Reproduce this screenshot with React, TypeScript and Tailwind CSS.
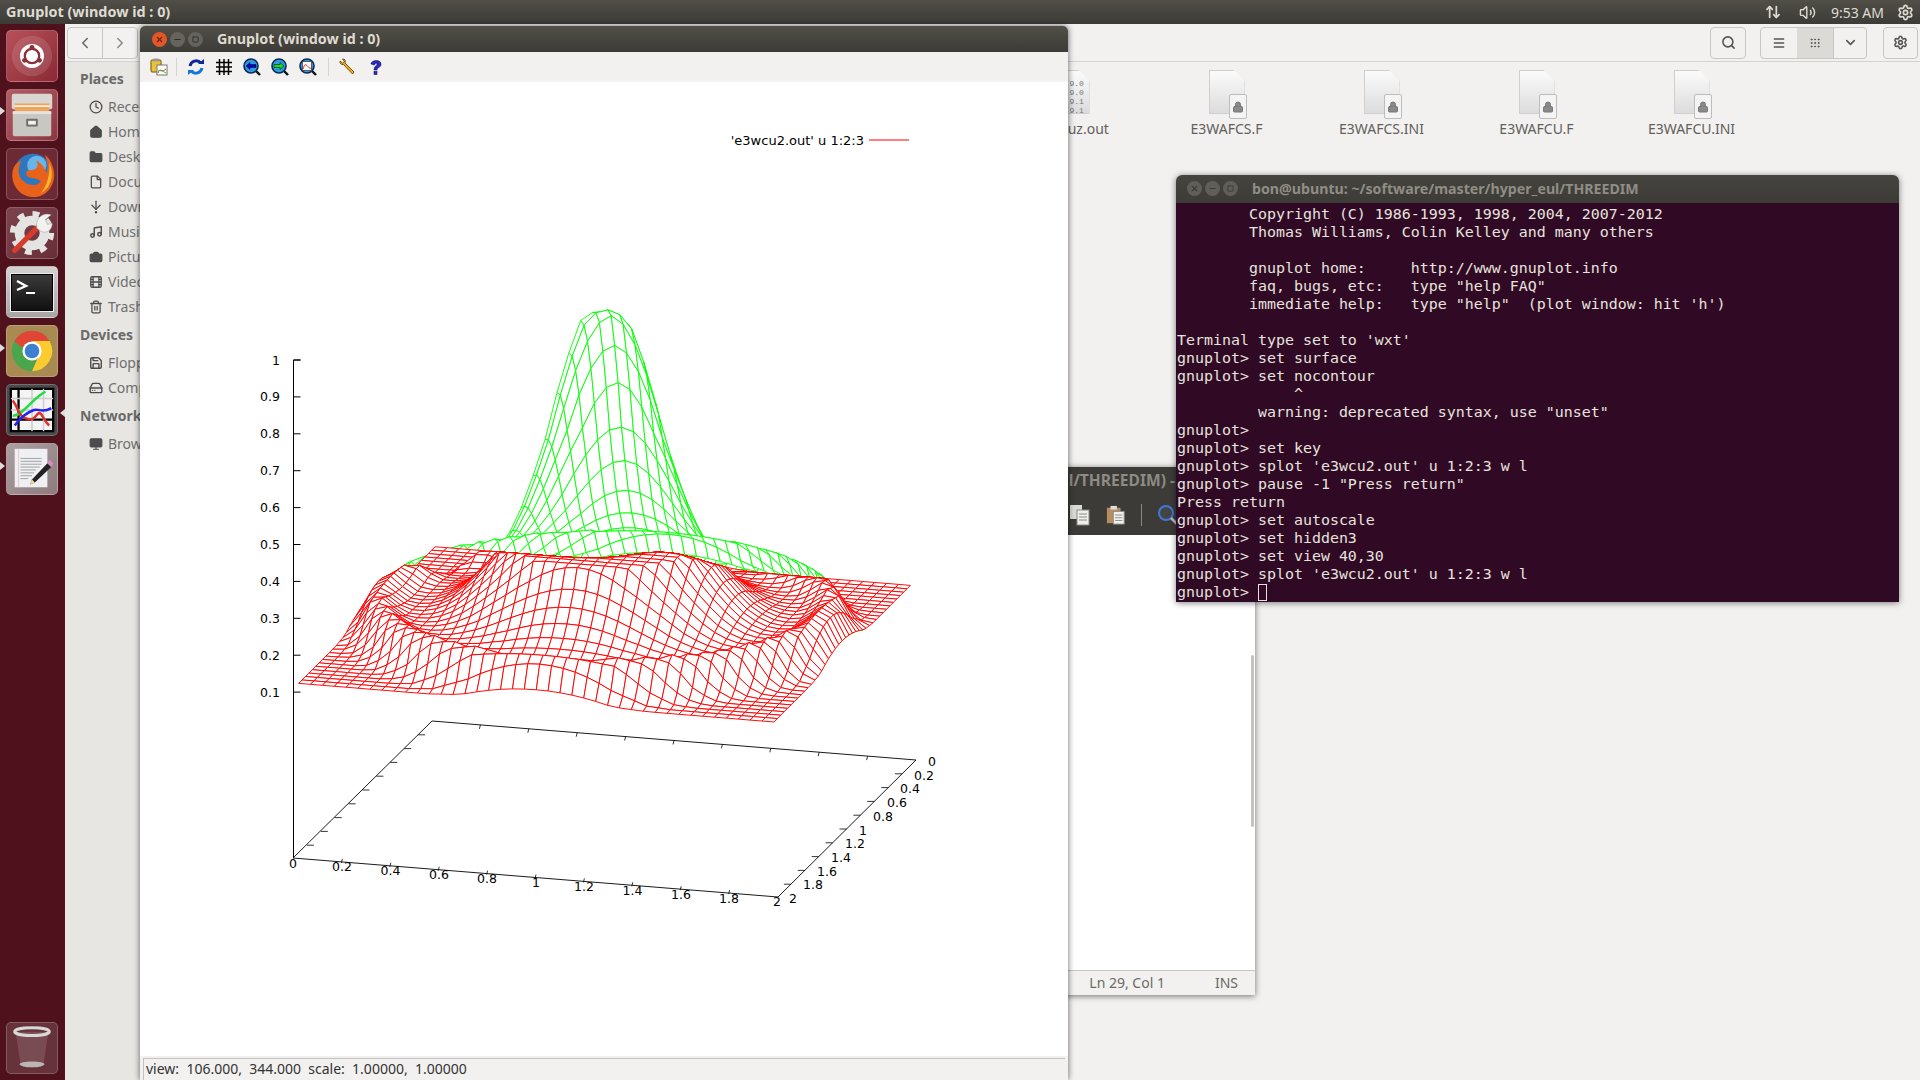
import React from "react";
import { Search, Menu, ChevronDown, Settings, ArrowUpDown, Volume2, Clock, Home, Folder, File, ArrowDownToDot, Music, Camera, Film, Trash2, Save, HardDrive, Monitor, Lock, ChevronLeft, ChevronRight, X, Minus, Square, Grip } from "lucide-react";

const UI = "font-['Noto_Sans','Open_Sans',sans-serif]";

const TABLE = [1, 0.995, 0.97, 0.88, 0.77, 0.64, 0.54, 0.45, 0.38, 0.33, 0.29, 0.255, 0.225, 0.205, 0.192, 0.188, 0.19, 0.21, 0.235, 0.22, 0.16, 0.13, 0.125];
function f(r: number) {
  const t = r / 0.05;
  if (t >= TABLE.length - 1) return 0.125;
  const i = Math.floor(t);
  return TABLE[i] + (TABLE[i + 1] - TABLE[i]) * (t - i);
}
function proj(x: number, y: number) {
  return [432 + (x / 2) * 484 - (y / 2) * 139, 721 + (x / 2) * 39 + (y / 2) * 138];
}
function projS(x: number, y: number) {
  const [a, b] = proj(x, y);
  return [605 + (a - 605) * 0.982, 809 + (b - 809) * 0.99];
}
function greenPt(x: number, y: number) {
  const r = Math.hypot(x - 1, y - 1);
  const [sx, sy] = projS(x, y);
  return [sx, sy - 129 - 369 * f(r)];
}
function smooth(t: number) {
  const u = Math.max(0, Math.min(1, t));
  return u * u * (3 - 2 * u);
}
const e0 = projS(0, 0), e1 = projS(2, 0);
const E0Y = e0[1] - 129 - 369 * 0.125;
const ESL = (e1[1] - e0[1]) / (e1[0] - e0[0]);
function redPt(x: number, y: number) {
  const r = Math.hypot(x - 1, y - 1);
  let k = smooth((y - 0.1) / 0.25);
  k *= 1 - (1 - smooth((x - 0.1) / 0.3)) * (1 - smooth((y - 0.5) / 0.3));
  const capped = f(Math.max(r, 0.4));
  const bump = 0.035 * Math.exp(-(((x - 1) / 0.2) ** 2)) * Math.exp(-((y / 0.15) ** 2));
  const z = 0.125 + k * (capped - 0.125) + bump;
  const [sx, sy] = projS(x, y);
  let py = sy - 129 - 369 * z;
  const edge = E0Y + (sx - e0[0]) * ESL - 13 * Math.exp(-(((sx - 667) / 50) ** 2));
  if (py < edge) py = edge;
  return [sx, py];
}
function quad(p: (x: number, y: number) => number[], i: number, j: number) {
  const s = 0.05;
  const a = p(i * s, j * s), b = p((i + 1) * s, j * s), c = p((i + 1) * s, (j + 1) * s), d = p(i * s, (j + 1) * s);
  const q = (v: number[]) => v[0].toFixed(1) + " " + v[1].toFixed(1);
  return `M${q(a)}L${q(b)}L${q(c)}L${q(d)}Z`;
}

function Plot() {
  const green: string[] = [];
  for (let j = 19; j >= 0; j--)
    for (let i = 0; i < 40; i++) {
      const r = Math.hypot((i + 0.5) * 0.05 - 1, (j + 0.5) * 0.05 - 1);
      if (r < 1.03) green.push(quad(greenPt, i, j));
    }
  const red: string[] = [];
  for (let j = 0; j < 40; j++) for (let i = 0; i < 40; i++) red.push(quad(redPt, i, j));
  const zt = ["1", "0.9", "0.8", "0.7", "0.6", "0.5", "0.4", "0.3", "0.2", "0.1"];
  const xl: [string, number, number][] = [["0", 293, 863], ["0.2", 342, 866], ["0.4", 390.5, 870], ["0.6", 439, 874], ["0.8", 487, 878], ["1", 536, 882], ["1.2", 584, 886], ["1.4", 632.5, 890], ["1.6", 681, 894], ["1.8", 729, 898], ["2", 777, 901]];
  const yl: [string, number, number][] = [["0", 932, 761], ["0.2", 924, 775], ["0.4", 910, 788], ["0.6", 897, 802], ["0.8", 883, 816], ["1", 863, 830], ["1.2", 855, 843], ["1.4", 841, 857], ["1.6", 827, 871], ["1.8", 813, 884], ["2", 793, 898]];
  const ticks: string[] = [];
  for (let i = 1; i < 10; i++) {
    const t = i / 5;
    const b = proj(t, 0), fr = proj(t, 2);
    ticks.push(`M${b[0]} ${b[1]}l-1 4`, `M${fr[0]} ${fr[1]}l1 -4`);
    const l = proj(0, t), rr = proj(2, t);
    ticks.push(`M${l[0]} ${l[1]}l7 0`, `M${rr[0]} ${rr[1]}l-7 0`);
  }
  return (
    <svg viewBox="140 82 928 974" className="absolute inset-0 w-full h-full">
      <text x="864" y="144.5" textAnchor="end" fontSize="13" fill="#000" fontFamily="DejaVu Sans">'e3wcu2.out' u 1:2:3</text>
      <path d="M869 140H909" stroke="#ff0000" strokeWidth="1" />
      <g fill="#fff" stroke="#00ff00" strokeWidth="0.9" strokeLinejoin="round">
        {green.map((d, i) => <path key={i} d={d} />)}
      </g>
      <g fill="#fff" stroke="#ff0000" strokeWidth="0.95" strokeLinejoin="round">
        {red.map((d, i) => <path key={i} d={d} />)}
      </g>
      <g fill="none" stroke="#000" strokeWidth="1">
        <path d="M293.5 858V360M293.5 360h7" />
        {zt.map((_, i) => <path key={i} d={`M293.5 ${(360 + i * 36.9).toFixed(1)}h7`} />)}
        <path d="M293 858L432 721L916 760L778 897Z" strokeWidth="0.9" />
        <path d={ticks.join("")} strokeWidth="0.8" />
      </g>
      <g fontFamily="DejaVu Sans" fontSize="12.5" fill="#000" textAnchor="end">
        {zt.map((t, i) => <text key={t} x="280" y={(364.5 + i * 36.9).toFixed(1)}>{t}</text>)}
      </g>
      <g fontFamily="DejaVu Sans" fontSize="12.5" fill="#000" textAnchor="middle">
        {xl.map(([t, x, y]) => <text key={"x" + t} x={x} y={y + 4.5}>{t}</text>)}
        {yl.map(([t, x, y]) => <text key={"y" + t} x={x} y={y + 4.5}>{t}</text>)}
      </g>
    </svg>
  );
}

function Tile({ bg, children }: { bg: string; children: React.ReactNode }) {
  return <div className={`w-[52px] h-[52px] rounded-[5px] border border-white/20 overflow-hidden flex items-center justify-center shrink-0 ${bg}`}>{children}</div>;
}

function Launcher() {
  return (
    <div className="w-[65px] shrink-0 bg-[#4f121d] flex flex-col items-start pl-[6px] pt-[6px] pb-[6px] gap-[7px] relative">
      <Tile bg="bg-gradient-to-br from-[#b8505a] to-[#8a2a34]">
        <svg viewBox="0 0 52 52" className="w-full h-full">
          <circle cx="26" cy="26" r="21" fill="#fff" opacity="0.12" />
          <circle cx="26" cy="26" r="12.5" fill="#fff" />
          <circle cx="26" cy="26" r="7.5" fill="none" stroke="#8c2f38" strokeWidth="2.4" />
          <circle cx="26" cy="17" r="2.5" fill="#8c2f38" /><circle cx="18.2" cy="30.5" r="2.5" fill="#8c2f38" /><circle cx="33.8" cy="30.5" r="2.5" fill="#8c2f38" />
        </svg>
      </Tile>
      <Tile bg="bg-gradient-to-br from-[#b45d66] to-[#8b3741]">
        <svg viewBox="0 0 52 52" className="w-full h-full">
          <rect x="5" y="4" width="42" height="16" rx="2" fill="#d9d7d2" />
          <rect x="8" y="14" width="36" height="8" fill="#f0a35c" /><rect x="8" y="16" width="36" height="1.5" fill="#fff" />
          <rect x="6" y="22" width="40" height="26" rx="1.5" fill="#c9c7c2" /><rect x="6" y="22" width="40" height="3" fill="#e5e3df" />
          <rect x="20" y="30" width="12" height="8" rx="1" fill="#6e6c68" /><rect x="22" y="32" width="8" height="4" fill="#f1f1f1" />
        </svg>
      </Tile>
      <Tile bg="bg-[#6d2a34]">
        <svg viewBox="0 0 52 52" className="w-full h-full">
          <circle cx="27" cy="25" r="20" fill="#2f76bd" /><circle cx="31" cy="17" r="10" fill="#69b5ea" />
          <path d="M6 22C3 36 13 50 28 50C41 50 50 38 49 25C48 16 44 9 39 6C43 13 43 20 41 25C39 19 35 14 30 12C34 18 31 21 26 22C20 21 18 26 22 29C27 31 33 30 35 34C30 40 19 38 14 30C11 25 12 18 15 12C10 14 7 18 6 22Z" fill="#e8621c" />
          <path d="M44 14C49 26 47 40 35 46C42 38 45 26 44 14Z" fill="#f9b52b" />
        </svg>
      </Tile>
      <Tile bg="bg-gradient-to-br from-[#7d434c] to-[#6a2e38]">
        <svg viewBox="0 0 52 52" className="w-full h-full">
          <circle cx="26" cy="26" r="13" fill="none" stroke="#e4e4e2" strokeWidth="10" />
          <circle cx="26" cy="26" r="20" fill="none" stroke="#e4e4e2" strokeWidth="6" strokeDasharray="7 8.7" />
          <path d="M8 44L34 18" stroke="#d43d2a" strokeWidth="5.5" strokeLinecap="round" />
          <path d="M31 21C29 12 36 4 46 7L40 12L42 17L47 16C47 24 40 27 35 24Z" fill="#f2f2f0" stroke="#999" strokeWidth="0.5" />
        </svg>
      </Tile>
      <Tile bg="bg-gradient-to-b from-[#d4d1d0] to-[#a9a5a5]">
        <div className="w-[42px] h-[37px] bg-gradient-to-b from-[#3b3b3b] to-[#111] border border-[#000] outline outline-1 outline-[#eee]">
          <svg viewBox="0 0 40 35" className="w-full h-full"><path d="M5 6L14 11L5 15" fill="none" stroke="#fff" strokeWidth="2.4" /><path d="M14 18H23" stroke="#fff" strokeWidth="2.2" /></svg>
        </div>
      </Tile>
      <Tile bg="bg-[#a98a53]">
        <svg viewBox="0 0 52 52" className="w-full h-full">
          <circle cx="26" cy="26" r="21" fill="#4aa64d" />
          <path d="M26 5A21 21 0 0 1 44.2 15.5L26 15.5L15 22L7.8 15.5A21 21 0 0 1 26 5Z" fill="#e04538" />
          <path d="M44.2 15.5A21 21 0 0 1 26 47L35 26L26 15.5Z" fill="#fbcb30" />
          <circle cx="26" cy="26" r="10" fill="#fff" /><circle cx="26" cy="26" r="7.6" fill="#3d80cf" />
        </svg>
      </Tile>
      <Tile bg="bg-[#4b4b4b]">
        <svg viewBox="0 0 52 52" className="w-full h-full">
          <rect x="4" y="4" width="44" height="44" fill="#f4f4f4" stroke="#000" strokeWidth="2.4" />
          <path d="M12 4V48M4 36H48" stroke="#000" strokeWidth="2.4" />
          <path d="M26 4V48M38 4V48M4 14H48M4 26H48" stroke="#ccc" strokeWidth="1.5" />
          <path d="M6 32C12 32 18 26 24 20S36 9 40 7" fill="none" stroke="#22dd44" strokeWidth="2.6" />
          <path d="M6 16C12 24 12 32 18 34C24 36 26 38 32 30C36 26 38 38 44 42" fill="none" stroke="#e23030" strokeWidth="2.6" />
          <path d="M8 42C14 34 22 28 28 26S36 30 46 24" fill="none" stroke="#2222ee" strokeWidth="2.6" />
        </svg>
      </Tile>
      <Tile bg="bg-gradient-to-br from-[#aba0a1] to-[#8e7b7d]">
        <svg viewBox="0 0 52 52" className="w-full h-full">
          <rect x="8" y="5" width="34" height="40" fill="#eef0f4" />
          <path d="M12 5V45" stroke="#f0b0b0" strokeWidth="0.6" />
          <path d="M14 15H36M14 18H36M14 21H36M14 24H34M14 27H30M14 30H28M14 33H26M14 36H22" stroke="#8b8b8b" strokeWidth="0.8" />
          <path d="M26 37L42 20L46 24L29 40L24 42Z" fill="#222" /><path d="M42 20L44 16L48 20L46 24Z" fill="#d98cc0" /><path d="M26 37L29 40L24 42Z" fill="#f3e08a" />
        </svg>
      </Tile>
      <div className="flex-1" />
      <Tile bg="bg-[#66323b]">
        <svg viewBox="0 0 52 52" className="w-full h-full">
          <path d="M9 9L14 43C20 47 32 47 38 43L43 9Z" fill="#fff" opacity="0.13" />
          <ellipse cx="26" cy="9" rx="18" ry="4" fill="none" stroke="#d8d8d6" strokeWidth="3" />
          <ellipse cx="26" cy="43" rx="13" ry="3" fill="#cfcfcd" opacity="0.8" />
        </svg>
      </Tile>
      <div className="absolute left-0 top-[83px] w-0 h-0 border-y-[4px] border-y-transparent border-l-[5px] border-l-[#ddd]" />
      <div className="absolute left-0 top-[320px] w-0 h-0 border-y-[4px] border-y-transparent border-l-[5px] border-l-[#ddd]" />
      <div className="absolute left-0 top-[438px] w-0 h-0 border-y-[4px] border-y-transparent border-l-[5px] border-l-[#ddd]" />
      <div className="absolute right-0 top-[385px] w-0 h-0 border-y-[4px] border-y-transparent border-r-[5px] border-r-[#ddd]" />
    </div>
  );
}

function SideItem({ icon, label }: { icon: React.ReactNode; label: string }) {
  return <div className="h-[25px] flex items-center pl-[24px] gap-[5px] text-[14px] text-[#6f6f6f] whitespace-nowrap"><span className="w-[14px] flex justify-center text-[#4c4c4c]">{icon}</span>{label}</div>;
}
function SideHead({ label }: { label: string }) {
  return <div className="h-[31px] flex items-center pl-[15px] text-[14px] font-bold text-[#6a6a6a]">{label}</div>;
}

function FileIcon({ name, text }: { name: string; text?: boolean }) {
  return (
    <div className="w-[155px] shrink-0 flex flex-col items-center">
      <div className="relative w-[36px] h-[44px] mt-[8px] bg-gradient-to-b from-[#fbfbfb] to-[#dcdcdc] border border-[#cfcfcf] [clip-path:polygon(0_0,70%_0,100%_25%,100%_100%,0_100%)]">
        {text && <div className="font-['Liberation_Mono',monospace] text-[8px] leading-[9px] text-[#777] pl-[15px] pt-[8px]">9.0<br />9.0<br />9.1<br />9.1</div>}
      </div>
      {!text && <div className="absolute mt-[32px] ml-[22px] w-[18px] h-[25px] rounded-[2px] bg-[#f4f4f4] border border-[#bdbdbd] flex items-center justify-center"><Lock size={12} className="text-[#777]" fill="#8a8a8a" /></div>}
      <div className={`mt-[4px] text-[14px] text-[#62605c] whitespace-nowrap ${UI}`}>{name}</div>
    </div>
  );
}

function FileManager() {
  const tb = "border border-[#c8c6c2] rounded-[4px] flex items-center justify-center text-[#555]";
  return (
    <div className={`flex-1 flex flex-col bg-[#f2f1ef] min-w-0 ${UI}`}>
      <div className="h-[38px] shrink-0 bg-[#f2f1f0] border-b border-[#d4d2ce] flex items-center pl-[2px] pr-[2px]">
        <div className="flex w-[71px] h-[32px] border border-[#c8c6c2] rounded-[4px] text-[#666]">
          <div className="w-[35px] flex items-center justify-center border-r border-[#c8c6c2]"><ChevronLeft size={18} /></div>
          <div className="flex-1 flex items-center justify-center text-[#888]"><ChevronRight size={18} /></div>
        </div>
        <div className="flex-1" />
        <div className={`w-[36px] h-[32px] ${tb}`}><Search size={15} strokeWidth={2.5} /></div>
        <div className="w-[14px]" />
        <div className={`flex w-[107px] h-[32px] ${tb} overflow-hidden`}>
          <div className="w-[36px] h-full flex items-center justify-center"><Menu size={14} strokeWidth={2.5} /></div>
          <div className="w-[36px] h-full flex items-center justify-center bg-[#dcdad6]"><Grip size={12} /></div>
          <div className="flex-1 h-full flex items-center justify-center border-l border-[#c8c6c2]"><ChevronDown size={15} strokeWidth={2.5} /></div>
        </div>
        <div className="w-[16px]" />
        <div className={`w-[35px] h-[32px] ${tb}`}><Settings size={15} strokeWidth={2.5} /></div>
      </div>
      <div className="flex-1 flex min-h-0">
        <div className="w-[75px] shrink-0 bg-[#e8e6e3] overflow-hidden pt-px">
          <SideHead label="Places" />
          <SideItem icon={<Clock size={14} strokeWidth={2.2} />} label="Recent" />
          <SideItem icon={<Home size={14} fill="currentColor" />} label="Home" />
          <SideItem icon={<Folder size={14} fill="currentColor" />} label="Desktop" />
          <SideItem icon={<File size={14} strokeWidth={2.2} />} label="Documents" />
          <SideItem icon={<ArrowDownToDot size={14} strokeWidth={2.2} />} label="Downloads" />
          <SideItem icon={<Music size={14} strokeWidth={2.5} />} label="Music" />
          <SideItem icon={<Camera size={14} fill="currentColor" stroke="currentColor" />} label="Pictures" />
          <SideItem icon={<Film size={14} strokeWidth={2.2} />} label="Videos" />
          <SideItem icon={<Trash2 size={14} strokeWidth={2.2} />} label="Trash" />
          <SideHead label="Devices" />
          <SideItem icon={<Save size={14} strokeWidth={2.4} />} label="Floppy Disk" />
          <SideItem icon={<HardDrive size={14} strokeWidth={2.4} />} label="Computer" />
          <SideHead label="Network" />
          <SideItem icon={<Monitor size={14} fill="currentColor" />} label="Browse Network" />
        </div>
        <div className="flex-1 min-w-0 overflow-hidden flex items-start pl-[854px]">
          <FileIcon name="e3wcuz.out" text />
          <FileIcon name="E3WAFCS.F" />
          <FileIcon name="E3WAFCS.INI" />
          <FileIcon name="E3WAFCU.F" />
          <FileIcon name="E3WAFCU.INI" />
        </div>
      </div>
    </div>
  );
}

function Dots({ active }: { active?: boolean }) {
  const s = active ? "bg-[#65635c] text-[#2f2e2a]" : "bg-[#5f5e58] text-[#3c3b37]";
  return (
    <div className="flex gap-[3px] items-center">
      <div className={`w-[15px] h-[15px] rounded-full flex items-center justify-center ${active ? "bg-[#e2572a] text-[#6b2410]" : s}`}><X size={9} strokeWidth={3} /></div>
      <div className={`w-[15px] h-[15px] rounded-full flex items-center justify-center ${s}`}><Minus size={9} strokeWidth={3} /></div>
      <div className={`w-[15px] h-[15px] rounded-full flex items-center justify-center ${s}`}><Square size={7} strokeWidth={3} /></div>
    </div>
  );
}

function GnuplotToolbar() {
  const zoom = (inner: React.ReactNode) => (
    <svg viewBox="0 0 18 18" className="w-[18px] h-[18px]">
      <path d="M13 13L17 17" stroke="#111" strokeWidth="2.4" />
      <circle cx="8" cy="8" r="7" fill="#2f9be0" stroke="#0b2a55" strokeWidth="1.6" />
      {inner}
    </svg>
  );
  return (
    <div className="h-[30px] shrink-0 bg-[#f2f1f0] flex items-center">
      <div className="w-[31px] flex justify-center pl-[6px]">
        <svg viewBox="0 0 18 18" className="w-[18px] h-[18px] shrink-0"><rect x="1" y="2" width="10" height="12" rx="1" fill="#e8c33a" stroke="#6b5510" /><rect x="3.5" y="0.5" width="5" height="3" fill="#999" /><rect x="7" y="7" width="10" height="10" fill="#fff" stroke="#777" /><path d="M8 15C10 9 12 15 16 11" stroke="#e33" fill="none" /><path d="M8 13C10 12 13 13 16 15" stroke="#2c2" fill="none" /></svg>
      </div>
      <div className="w-[5px]" />
      <div className="w-px h-[18px] bg-[#d6d4d0]" />
      <div className="w-[10px]" />
      <div className="w-[18px] flex justify-center mr-[10px]">
        <svg viewBox="0 0 18 18" className="w-[18px] h-[18px]" fill="none"><path d="M3 8C4 3 10 1 14 5" stroke="#0a2a9a" strokeWidth="3" /><path d="M11 6H17V1Z" fill="#0a2a9a" /><path d="M15 10C14 15 8 17 4 13" stroke="#1277d8" strokeWidth="3" /><path d="M7 12H1V17Z" fill="#1277d8" /></svg>
      </div>
      <div className="w-[18px] flex justify-center mr-[10px]">
        <svg viewBox="0 0 18 18" className="w-[18px] h-[18px]"><path d="M4.5 1V17M9 1V17M13.5 1V17M1 4.5H17M1 9H17M1 13.5H17" stroke="#000" strokeWidth="1.5" /></svg>
      </div>
      <div className="w-[18px] mr-[10px]">{zoom(<path d="M3 8L7 4.5V6.5H13V9.5H7V11.5Z" fill="#0505d0" stroke="#000" strokeWidth="0.5" />)}</div>
      <div className="w-[18px] mr-[10px]">{zoom(<path d="M13 8L9 4.5V6.5H3V9.5H9V11.5Z" fill="#10e010" stroke="#000" strokeWidth="0.5" />)}</div>
      <div className="w-[18px] mr-[10px]">{zoom(<><rect x="3.5" y="3.5" width="9" height="9" fill="#fff" stroke="#333" strokeWidth="0.7" /><path d="M4 11C7 1 9 12 12 10" stroke="#e22" fill="none" /></>)}</div>
      <div className="w-px h-[18px] bg-[#d6d4d0] ml-[1px]" />
      <div className="w-[10px]" />
      <svg viewBox="0 0 18 18" className="w-[18px] h-[18px] mr-[10px]"><path d="M6 5L15 14L13.5 16L4.5 6.5C2 7 0.5 5 1 3L3.5 5L5.5 3.5L3.5 1C6 0.5 7 3 6 5Z" fill="#f2a818" stroke="#5b3d05" strokeWidth="0.8" /></svg>
      <svg viewBox="0 0 18 18" className="w-[18px] h-[18px]"><path d="M4 6C4 2 14 1 14 6C14 10 10 9 10 12H7C7 8 10 8 10 6C10 4.5 8 5 7.5 7Z" fill="#2a2ab8" stroke="#111166" strokeWidth="0.6" /><rect x="7" y="13.5" width="3" height="3" fill="#2a2ab8" stroke="#111166" strokeWidth="0.6" /></svg>
    </div>
  );
}

function GnuplotWindow() {
  return (
    <div className={`absolute left-[140px] top-[26px] w-[928px] h-[1054px] flex flex-col shadow-[0_0_6px_rgba(0,0,0,0.6)] bg-white rounded-t-[5px] ${UI}`}>
      <div className="h-[26px] shrink-0 rounded-t-[5px] bg-gradient-to-b from-[#514f47] to-[#3c3b37] flex items-center pl-[12px]">
        <Dots active />
        <div className="ml-[14px] text-[14.3px] font-bold text-[#dfdbd2] whitespace-nowrap">Gnuplot (window id : 0)</div>
      </div>
      <GnuplotToolbar />
      <div className="flex-1 relative bg-white overflow-hidden"><Plot /></div>
      <div className="h-[24px] shrink-0 bg-[#f2f1f0] pl-[3px] pr-[3px] pt-[2px]">
        <div className="h-full border-l border-t border-[#c4c2be] pl-[2px] text-[14px] leading-[20px] text-[#333] whitespace-pre">view:  106.000,  344.000  scale:  1.00000,  1.00000</div>
      </div>
    </div>
  );
}

function Editor() {
  return (
    <div className={`absolute left-[700px] top-[467px] w-[555px] h-[528px] flex flex-col bg-white shadow-[0_1px_6px_rgba(0,0,0,0.55)] rounded-t-[5px] ${UI}`}>
      <div className="h-[68px] shrink-0 bg-[#3c3b37] rounded-t-[5px] flex flex-col">
        <div className="h-[28px] flex items-center justify-end pr-[80px] text-[15.6px] font-bold text-[#8d8b83] whitespace-nowrap">(~/software/master/hyper_eul/THREEDIM) -</div>
        <div className="flex-1 flex items-center justify-end pr-[84px]">
          <svg viewBox="0 0 20 22" className="w-[20px] h-[22px] mr-[16px]"><rect x="0" y="1" width="12" height="14" fill="#d9d9d6" /><rect x="7" y="6" width="12" height="15" fill="#efefec" stroke="#888" /><path d="M9 10H17M9 13H17M9 16H17" stroke="#888" /></svg>
          <svg viewBox="0 0 22 22" className="w-[20px] h-[22px] mr-[15px]"><rect x="1" y="3" width="15" height="17" fill="#b58d5e" /><rect x="5" y="1" width="7" height="4" fill="#ddd" /><rect x="8" y="7" width="12" height="14" fill="#efefec" stroke="#888" /><path d="M10 11H18M10 14H18M10 17H18" stroke="#888" /></svg>
          <div className="w-px h-[22px] bg-[#8a8984] mr-[15px]" />
          <svg viewBox="0 0 22 22" className="w-[22px] h-[22px] mr-[-8px]"><circle cx="9" cy="9" r="7" fill="#444" stroke="#3f78d8" strokeWidth="2" /><path d="M14 14L20 20" stroke="#bbb" strokeWidth="2.5" /></svg>
        </div>
      </div>
      <div className="flex-1 flex justify-end bg-white border-l border-[#ccc]">
        <div className="w-[3px] h-[172px] mt-[120px] mr-[1px] bg-[#c3c3c3] rounded-full" />
      </div>
      <div className="h-[25px] shrink-0 bg-[#f2f1f0] border-t border-[#c8c6c2] flex items-center justify-end text-[14px] text-[#6b6a66] pb-px">
        <span className="mr-[50px]">Ln 29, Col 1</span>
        <span className="mr-[17px]">INS</span>
      </div>
    </div>
  );
}

const TERM = `        Copyright (C) 1986-1993, 1998, 2004, 2007-2012
        Thomas Williams, Colin Kelley and many others

        gnuplot home:     http://www.gnuplot.info
        faq, bugs, etc:   type "help FAQ"
        immediate help:   type "help"  (plot window: hit 'h')

Terminal type set to 'wxt'
gnuplot> set surface
gnuplot> set nocontour
             ^
         warning: deprecated syntax, use "unset"
gnuplot>
gnuplot> set key
gnuplot> splot 'e3wcu2.out' u 1:2:3 w l
gnuplot> pause -1 "Press return"
Press return
gnuplot> set autoscale
gnuplot> set hidden3
gnuplot> set view 40,30
gnuplot> splot 'e3wcu2.out' u 1:2:3 w l
gnuplot> `;

function Terminal() {
  return (
    <div className={`absolute left-[1176px] top-[175px] w-[723px] h-[427px] flex flex-col shadow-[0_1px_6px_rgba(0,0,0,0.5)] rounded-t-[6px] overflow-hidden`}>
      <div className={`h-[28px] shrink-0 bg-gradient-to-b from-[#45443f] to-[#3c3b37] flex items-center pl-[11px] pb-px ${UI}`}>
        <Dots />
        <div className="ml-[14px] text-[14.2px] font-bold text-[#8f8d84] whitespace-nowrap">bon@ubuntu: ~/software/master/hyper_eul/THREEDIM</div>
      </div>
      <div className="flex-1 bg-[#300a24] pl-[1px] pt-[2px] overflow-hidden">
        <pre className="font-['DejaVu_Sans_Mono',monospace] text-[14.95px] leading-[18px] text-[#e6e3de]">{TERM}<span className="inline-block w-[9px] h-[17px] border border-[#e6e3de] align-[-4px]" /></pre>
      </div>
    </div>
  );
}

export default function App() {
  return (
    <div className="relative w-[1920px] h-[1080px] overflow-hidden bg-[#f2f1ef] flex flex-col">
      <div className={`h-[24px] shrink-0 bg-gradient-to-b from-[#514f47] to-[#3c3b37] flex items-center pl-[6px] pr-[6px] text-[#dfdbd2] ${UI}`}>
        <div className="text-[14.4px] font-bold whitespace-nowrap">Gnuplot (window id : 0)</div>
        <div className="flex-1" />
        <ArrowUpDown size={16} strokeWidth={2.6} />
        <div className="w-[18px]" />
        <Volume2 size={17} />
        <div className="w-[15px]" />
        <div className="text-[14px] whitespace-nowrap">9:53 AM</div>
        <div className="w-[13px]" />
        <Settings size={17} strokeWidth={2.4} />
      </div>
      <div className="flex-1 flex min-h-0">
        <Launcher />
        <FileManager />
      </div>
      <Editor />
      <GnuplotWindow />
      <Terminal />
    </div>
  );
}
